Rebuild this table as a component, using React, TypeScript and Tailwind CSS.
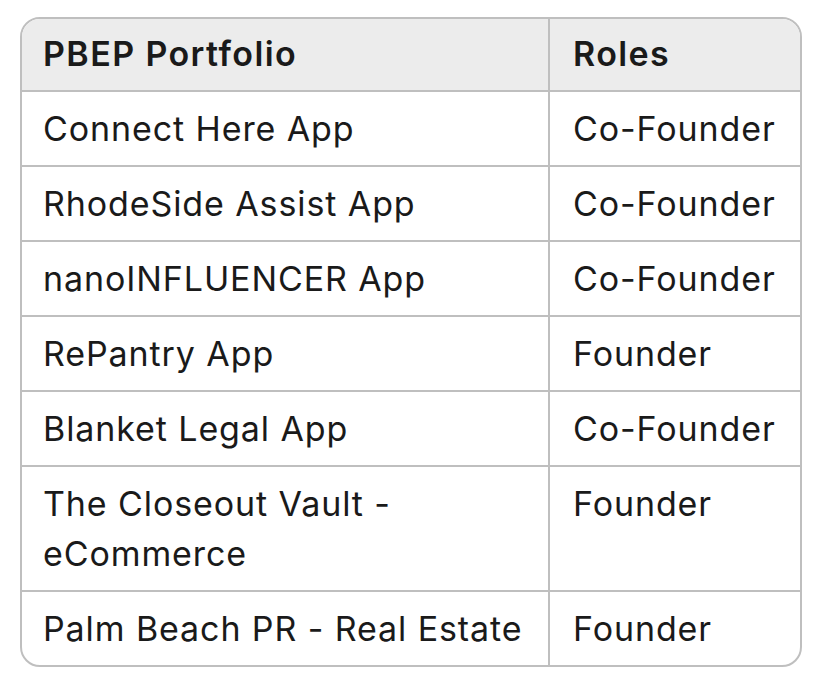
import React from 'react';

const rows = [
  { name: 'Connect Here App', role: 'Co-Founder' },
  { name: 'RhodeSide Assist App', role: 'Co-Founder' },
  { name: 'nanoINFLUENCER App', role: 'Co-Founder' },
  { name: 'RePantry App', role: 'Founder' },
  { name: 'Blanket Legal App', role: 'Co-Founder' },
  { name: 'The Closeout Vault - eCommerce', role: 'Founder' },
  { name: 'Palm Beach PR - Real Estate', role: 'Founder' },
];

const App = () => {
  return (
    <div className="min-h-screen bg-white pl-[20px] pt-[17px] font-['Inter',sans-serif] text-[#1a1a1a]">
      <div className="w-[782px] overflow-hidden rounded-[20px] border-2 border-[#bfbfbf]">
        <table className="w-full border-collapse text-left text-[34px] leading-[50px] tracking-[0.9px]">
          <thead>
            <tr className="bg-[#ececec]">
              <th className="w-[527px] border-r-2 border-b-2 border-[#bfbfbf] px-[21px] pt-[10px] pb-[11px] font-semibold tracking-[1.4px]">
                PBEP Portfolio
              </th>
              <th className="border-b-2 border-[#bfbfbf] px-[23px] pt-[10px] pb-[11px] font-semibold tracking-[1.4px]">
                Roles
              </th>
            </tr>
          </thead>
          <tbody>
            {rows.map((r, i) => (
              <tr key={r.name}>
                <td
                  className={`border-r-2 border-[#bfbfbf] px-[21px] pt-[12px] pb-[11px] align-top ${
                    i < rows.length - 1 ? 'border-b-2' : ''
                  }`}
                >
                  {r.name}
                </td>
                <td
                  className={`border-[#bfbfbf] px-[23px] pt-[12px] pb-[11px] align-top ${
                    i < rows.length - 1 ? 'border-b-2' : ''
                  }`}
                >
                  {r.role}
                </td>
              </tr>
            ))}
          </tbody>
        </table>
      </div>
    </div>
  );
};

export default App;
